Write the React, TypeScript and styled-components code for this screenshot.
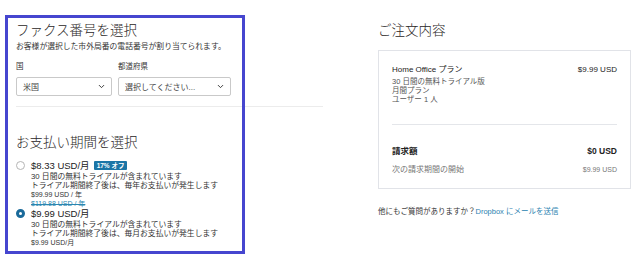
import styled, { createGlobalStyle } from 'styled-components';
import { ChevronDown } from 'lucide-react';

const GlobalStyle = createGlobalStyle`
  html, body {
    margin: 0;
    padding: 0;
    background: #fff;
  }
  body {
    font-family: 'Liberation Sans', 'Noto Sans CJK JP', sans-serif;
    color: #1e1919;
  }
`;

const Page = styled.div`
  position: relative;
  width: 640px;
  height: 261px;
  display: flex;
  gap: 55px;
  padding: 23px 0 0 16px;
  box-sizing: border-box;
`;

// 스크린샷 위 파란 강조 박스
const Highlight = styled.div`
  position: absolute;
  left: 5px;
  top: 15px;
  width: 240px;
  height: 239px;
  border: 3px solid #4646cf;
  box-sizing: border-box;
  pointer-events: none;
`;

const LeftCol = styled.div`
  width: 307px;
  display: flex;
  flex-direction: column;
`;

const RightCol = styled.div`
  width: 253px;
  display: flex;
  flex-direction: column;
`;

const Title = styled.h2`
  margin: 0;
  font-size: 13.5px;
  line-height: 16px;
  font-weight: 300;
  color: #2a2626;
`;

const Sub = styled.p`
  margin: 3px 0 0;
  font-size: 7.8px;
  line-height: 10px;
  color: #333;
`;

const FaxSection = styled.section`
  padding-bottom: 10px;
  border-bottom: 1px solid #ececec;
`;

const Fields = styled.div`
  display: flex;
  gap: 6px;
  margin-top: 10px;
`;

const Field = styled.div<{ $w: number }>`
  width: ${(p) => p.$w}px;
  display: flex;
  flex-direction: column;
  gap: 5px;
`;

const Label = styled.span`
  font-size: 7.5px;
  line-height: 10px;
  color: #333;
`;

const Select = styled.div`
  height: 19px;
  box-sizing: border-box;
  border: 1px solid #c9c9c9;
  border-radius: 2px;
  display: flex;
  align-items: center;
  justify-content: space-between;
  padding: 0 5px 0 6px;
  font-size: 8px;
  color: #444;
`;

const PaySection = styled.section`
  margin-top: 28px;
`;

const Options = styled.div`
  margin-top: 9px;
  display: flex;
  flex-direction: column;
`;

const Option = styled.div`
  display: flex;
  gap: 6px;
`;

const Radio = styled.span<{ $on?: boolean }>`
  flex: none;
  width: 9px;
  height: 9px;
  margin-top: 1px;
  border-radius: 50%;
  box-sizing: border-box;
  border: ${(p) => (p.$on ? '3px solid #1a6a9a' : '1px solid #b5b5b5')};
  background: #fff;
`;

const OptBody = styled.div`
  display: flex;
  flex-direction: column;
`;

const Price = styled.div`
  display: flex;
  align-items: center;
  gap: 4px;
  font-size: 9.5px;
  line-height: 11px;
  color: #222;
`;

const Badge = styled.span`
  background: #1b75a6;
  color: #fff;
  font-size: 6.5px;
  font-weight: 700;
  line-height: 9px;
  padding: 0 3px;
  border-radius: 1px;
`;

const Line = styled.div<{ $strike?: boolean; $small?: boolean }>`
  font-size: ${(p) => (p.$small ? '7px' : '7.8px')};
  line-height: 9px;
  color: ${(p) => (p.$strike ? '#2a86b0' : '#333')};
  text-decoration: ${(p) => (p.$strike ? 'line-through' : 'none')};
`;

const Lines = styled.div`
  margin-top: 1px;
`;

const Card = styled.div`
  margin-top: 11px;
  border: 1px solid #e1e3e8;
  padding: 14px 13px 13px;
  display: flex;
  flex-direction: column;
`;

const Row = styled.div<{ $bold?: boolean; $muted?: boolean }>`
  display: flex;
  justify-content: space-between;
  align-items: baseline;
  font-size: ${(p) => (p.$bold ? '8.5px' : '8px')};
  font-weight: ${(p) => (p.$bold ? 700 : 400)};
  line-height: 10px;
  color: ${(p) => (p.$muted ? '#777' : '#222')};
`;

const Amount = styled.span<{ $small?: boolean }>`
  font-size: ${(p) => (p.$small ? '7px' : 'inherit')};
`;

const Detail = styled.div`
  font-size: 7.5px;
  line-height: 9px;
  color: #555;
`;

const Details = styled.div`
  margin-top: 2px;
  padding-bottom: 20px;
  border-bottom: 1px solid #e4e6ea;
  margin-bottom: 21px;
`;

const Spacer = styled.div`
  height: 9px;
`;

const Help = styled.p`
  margin: 18px 0 0;
  font-size: 7.5px;
  line-height: 10px;
  color: #333;

  a {
    color: #2a7fb0;
    text-decoration: none;
  }
`;

export default function App() {
  return (
    <>
      <GlobalStyle />
      <Page>
        <LeftCol>
          <FaxSection>
            <Title>ファクス番号を選択</Title>
            <Sub>お客様が選択した市外局番の電話番号が割り当てられます。</Sub>
            <Fields>
              <Field $w={96}>
                <Label>国</Label>
                <Select>
                  米国
                  <ChevronDown size={9} strokeWidth={2.5} color='#333' />
                </Select>
              </Field>
              <Field $w={113}>
                <Label>都道府県</Label>
                <Select>
                  選択してください...
                  <ChevronDown size={9} strokeWidth={2.5} color='#333' />
                </Select>
              </Field>
            </Fields>
          </FaxSection>

          <PaySection>
            <Title>お支払い期間を選択</Title>
            <Options>
              <Option>
                <Radio />
                <OptBody>
                  <Price>
                    $8.33 USD/月 <Badge>17% オフ</Badge>
                  </Price>
                  <Lines>
                    <Line>30 日間の無料トライアルが含まれています</Line>
                    <Line>トライアル期間終了後は、毎年お支払いが発生します</Line>
                    <Line $small>$99.99 USD / 年</Line>
                    <Line $small $strike>$119.88 USD / 年</Line>
                  </Lines>
                </OptBody>
              </Option>
              <Option>
                <Radio $on />
                <OptBody>
                  <Price>$9.99 USD/月</Price>
                  <Lines>
                    <Line>30 日間の無料トライアルが含まれています</Line>
                    <Line>トライアル期間終了後は、毎月お支払いが発生します</Line>
                    <Line $small>$9.99 USD/月</Line>
                  </Lines>
                </OptBody>
              </Option>
            </Options>
          </PaySection>
        </LeftCol>

        <RightCol>
          <Title>ご注文内容</Title>
          <Card>
            <Row>
              <span>Home Office プラン</span>
              <Amount>$9.99 USD</Amount>
            </Row>
            <Details>
              <Detail>30 日間の無料トライアル版</Detail>
              <Detail>月間プラン</Detail>
              <Detail>ユーザー 1 人</Detail>
            </Details>
            <Row $bold>
              <span>請求額</span>
              <span>$0 USD</span>
            </Row>
            <Spacer />
            <Row $muted>
              <span>次の請求期間の開始</span>
              <Amount $small>$9.99 USD</Amount>
            </Row>
          </Card>
          <Help>
            他にもご質問がありますか？<a href='#'>Dropbox にメールを送信</a>
          </Help>
        </RightCol>
        <Highlight />
      </Page>
    </>
  );
}
